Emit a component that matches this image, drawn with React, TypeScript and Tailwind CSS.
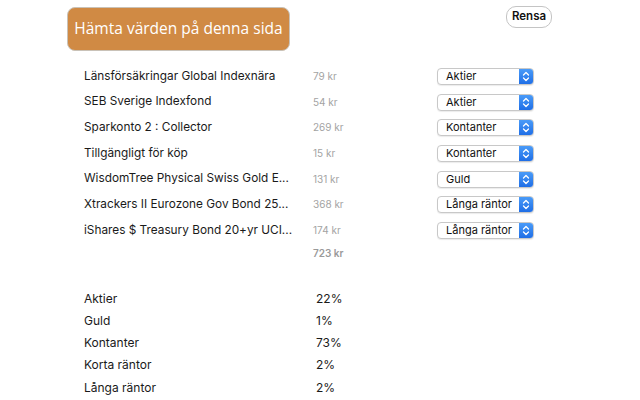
import React from 'react';

interface Holding {
  name: string;
  amount: string;
  category: string;
}

const holdings: Holding[] = [
  { name: 'Länsförsäkringar Global Indexnära', amount: '79 kr', category: 'Aktier' },
  { name: 'SEB Sverige Indexfond', amount: '54 kr', category: 'Aktier' },
  { name: 'Sparkonto 2 : Collector', amount: '269 kr', category: 'Kontanter' },
  { name: 'Tillgängligt för köp', amount: '15 kr', category: 'Kontanter' },
  { name: 'WisdomTree Physical Swiss Gold E...', amount: '131 kr', category: 'Guld' },
  { name: 'Xtrackers II Eurozone Gov Bond 25...', amount: '368 kr', category: 'Långa räntor' },
  { name: 'iShares $ Treasury Bond 20+yr UCI...', amount: '174 kr', category: 'Långa räntor' },
];

const summary = [
  { label: 'Aktier', share: '22%' },
  { label: 'Guld', share: '1%' },
  { label: 'Kontanter', share: '73%' },
  { label: 'Korta räntor', share: '2%' },
  { label: 'Långa räntor', share: '2%' },
];

const FakeSelect = ({ value }: { value: string }) => (
  <div className="flex h-[17px] w-[97px] items-stretch overflow-hidden rounded-[4px] border border-[#c8c8c8] bg-white shadow-[0_1px_1px_rgba(0,0,0,0.08)]">
    <span className="flex flex-1 items-center whitespace-nowrap pl-[8px] text-[11px] leading-none text-[#111]">{value}</span>
    <span className="flex w-[14px] items-center justify-center bg-gradient-to-b from-[#4a9bf8] to-[#1f6ee6]">
      <svg width="8" height="11" viewBox="0 0 8 11" fill="none">
        <path d="M1.5 4 L4 1.5 L6.5 4" stroke="white" strokeWidth="1.3" strokeLinecap="round" strokeLinejoin="round" />
        <path d="M1.5 7 L4 9.5 L6.5 7" stroke="white" strokeWidth="1.3" strokeLinecap="round" strokeLinejoin="round" />
      </svg>
    </span>
  </div>
);

export default function App() {
  return (
    <div className="h-[400px] w-[640px] overflow-hidden bg-white font-['Inter','Liberation_Sans',sans-serif] text-[#1a1a1a]">
      {/* Header */}
      <div className="flex items-start justify-between pl-[67px] pr-[88px] pt-[7px]">
        <button className="flex h-[44px] w-[223px] items-center justify-center whitespace-nowrap rounded-[8px] border border-[#c9c2b8] bg-[#d08a44] pb-px font-['Open_Sans','DejaVu_Sans',sans-serif] text-[15.5px] text-white">
          Hämta värden på denna sida
        </button>
        <button className="-mt-px flex h-[22px] w-[46px] items-center justify-center rounded-[10px] border border-[#c4c4c4] bg-white text-[11.5px] font-semibold text-[#111]">
          Rensa
        </button>
      </div>

      {/* Holdings */}
      <div className="mt-[12px] flex flex-col pl-[84px]">
        {holdings.map((h) => (
          <div key={h.name} className="flex h-[25.7px] items-center pt-px">
            <span className="w-[229px] whitespace-nowrap text-[11.8px]">{h.name}</span>
            <span className="w-[124px] text-[10px] text-[#a3a3a3]">{h.amount}</span>
            <FakeSelect value={h.category} />
          </div>
        ))}
        <div className="flex h-[21px] items-center">
          <span className="w-[229px]" />
          <span className="text-[10px] font-semibold text-[#9a9a9a]">723 kr</span>
        </div>
      </div>

      {/* Summary */}
      <div className="mt-[24px] flex flex-col pl-[84px]">
        {summary.map((s) => (
          <div key={s.label} className="flex h-[22.2px] items-center text-[12px]">
            <span className="w-[232px]">{s.label}</span>
            <span>{s.share}</span>
          </div>
        ))}
      </div>
    </div>
  );
}
